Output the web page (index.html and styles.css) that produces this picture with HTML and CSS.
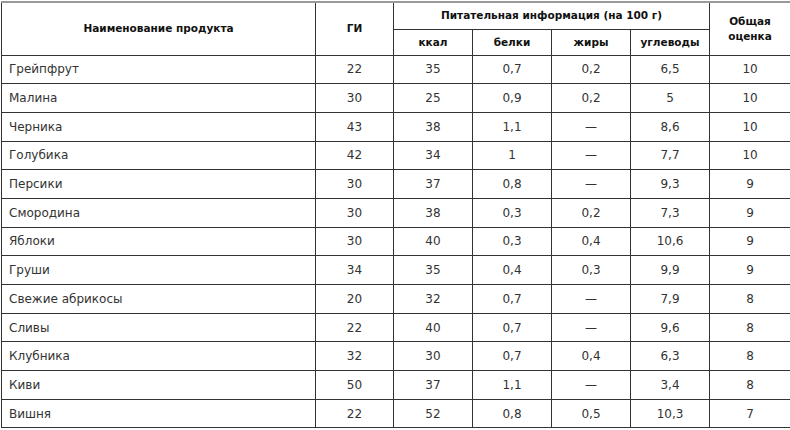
FILE: index.html
```html
<!DOCTYPE html>
<html lang="ru">
<head>
<meta charset="utf-8">
<link rel="stylesheet" href="styles.css">
</head>
<body>
<table class="gi">
  <colgroup>
    <col class="c-name"><col class="c-gi"><col class="c-n"><col class="c-n"><col class="c-n"><col class="c-n"><col class="c-score">
  </colgroup>
  <thead>
    <tr class="h1">
      <th rowspan="2">Наименование продукта</th>
      <th rowspan="2">ГИ</th>
      <th colspan="4">Питательная информация (на 100 г)</th>
      <th rowspan="2">Общая<br>оценка</th>
    </tr>
    <tr class="h2">
      <th>ккал</th><th>белки</th><th>жиры</th><th>углеводы</th>
    </tr>
  </thead>
  <tbody>
    <tr><td>Грейпфрут</td><td>22</td><td>35</td><td>0,7</td><td>0,2</td><td>6,5</td><td>10</td></tr>
    <tr><td>Малина</td><td>30</td><td>25</td><td>0,9</td><td>0,2</td><td>5</td><td>10</td></tr>
    <tr><td>Черника</td><td>43</td><td>38</td><td>1,1</td><td>—</td><td>8,6</td><td>10</td></tr>
    <tr><td>Голубика</td><td>42</td><td>34</td><td>1</td><td>—</td><td>7,7</td><td>10</td></tr>
    <tr><td>Персики</td><td>30</td><td>37</td><td>0,8</td><td>—</td><td>9,3</td><td>9</td></tr>
    <tr><td>Смородина</td><td>30</td><td>38</td><td>0,3</td><td>0,2</td><td>7,3</td><td>9</td></tr>
    <tr><td>Яблоки</td><td>30</td><td>40</td><td>0,3</td><td>0,4</td><td>10,6</td><td>9</td></tr>
    <tr><td>Груши</td><td>34</td><td>35</td><td>0,4</td><td>0,3</td><td>9,9</td><td>9</td></tr>
    <tr><td>Свежие абрикосы</td><td>20</td><td>32</td><td>0,7</td><td>—</td><td>7,9</td><td>8</td></tr>
    <tr><td>Сливы</td><td>22</td><td>40</td><td>0,7</td><td>—</td><td>9,6</td><td>8</td></tr>
    <tr><td>Клубника</td><td>32</td><td>30</td><td>0,7</td><td>0,4</td><td>6,3</td><td>8</td></tr>
    <tr><td>Киви</td><td>50</td><td>37</td><td>1,1</td><td>—</td><td>3,4</td><td>8</td></tr>
    <tr><td>Вишня</td><td>22</td><td>52</td><td>0,8</td><td>0,5</td><td>10,3</td><td>7</td></tr>
  </tbody>
</table>
</body>
</html>
```

FILE: styles.css
```css
html, body {
  margin: 0;
  padding: 0;
  background: #fff;
}
body {
  padding: 1px 0 0 1px;
  font-family: "DejaVu Sans", "Liberation Sans", sans-serif;
  color: #222;
}
.gi {
  border-collapse: collapse;
  table-layout: fixed;
  width: 788px;
  border-top: 2px solid #999;
}
.c-name { width: 314px; }
.c-gi { width: 78px; }
.c-n { width: 79px; }
.c-score { width: 81px; }
.gi th, .gi td {
  border: 1px solid #333;
  padding: 0;
  text-align: center;
  vertical-align: middle;
}
.gi th {
  font-size: 10.5px;
  font-weight: bold;
  color: #111;
  line-height: 15px;
}
.gi thead tr.h1 { height: 27px; }
.gi thead tr.h2 { height: 26px; }
.gi thead th { border-top: none; }
.gi tbody tr { height: 28.7px; }
.gi td {
  font-size: 12px;
  color: #333;
}
.gi td:first-child {
  text-align: left;
  padding-left: 7px;
}
```
